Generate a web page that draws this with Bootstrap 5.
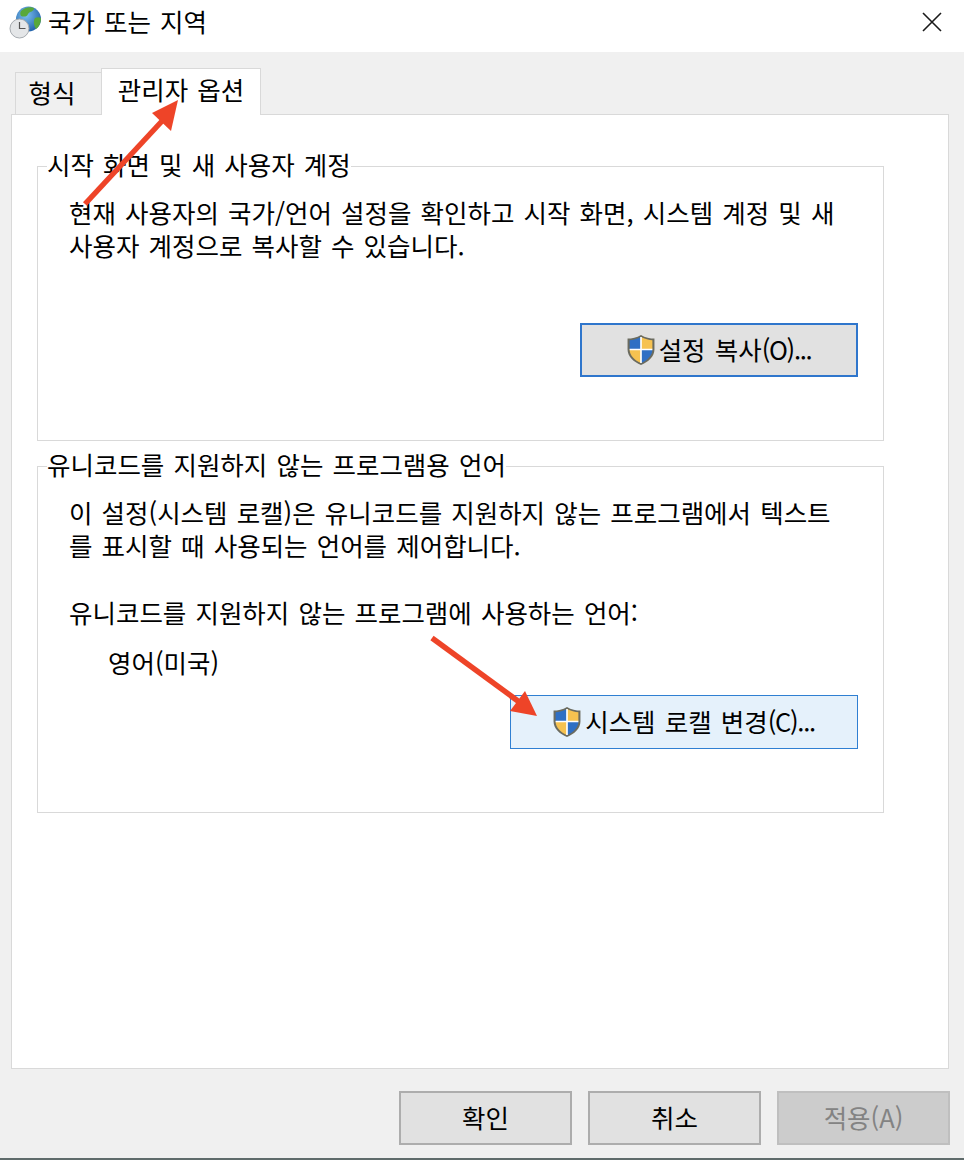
<!DOCTYPE html>
<html lang="ko">
  <head>
    <meta charset="UTF-8" />
    <meta name="viewport" content="width=device-width, initial-scale=1" />
    <title>국가 또는 지역</title>
    <link
      rel="stylesheet"
      href="https://cdn.jsdelivr.net/npm/bootstrap@5.3.0/dist/css/bootstrap.min.css"
    />
    <style>
      html, body { height: 100%; }
      body {
        width: 964px; height: 1160px; overflow: hidden; position: relative;
        background: #f0f0f0; color: #000;
        font-family: "Noto Sans CJK KR", "Liberation Sans", sans-serif;
        font-size: 25.5px; line-height: 33px; word-spacing: 2px;
      }
      .title-bar { height: 52px; background: #fff; padding: 0 22px 0 9px; }
      .title-text { margin-left: 5px; position: relative; top: -6px; }
      .close-icon { margin-top: -8px; }
      .tab-strip { height: 62px; padding: 16px 0 0 15px; align-items: flex-end; }
      .win-tab {
        background: #f0f0f0; border: 1px solid #d9d9d9; border-bottom: 0;
        height: 42px; width: 87px; padding-right: 13px; text-align: center; line-height: 37px;
      }
      .win-tab-on {
        background: #fff; height: 47px; width: 160px; margin-left: -1px; padding-right: 0;
        margin-bottom: -1px; position: relative; z-index: 1; line-height: 40px;
      }
      .tab-panel {
        background: #fff; border: 1px solid #d9d9d9; height: 955px;
        margin: 0 15px 0 11px; padding: 51px 64px 0 25px;
      }
      .group-box { border: 1px solid #d9d9d9; padding: 28px 30px 0 31px; position: relative; }
      .group-one { height: 275px; margin-bottom: 25px; }
      .group-two { height: 347px; }
      .group-title {
        position: absolute; left: 7px; top: -20px; background: transparent;
        padding: 0 2px; white-space: nowrap;
      }
      .group-title span { background: #fff; }
      .group-text { margin: 0; white-space: nowrap; }
      .win-btn {
        border-radius: 0; font-size: 25.5px; line-height: 33px; color: #000; padding: 0 0 4px;
        background: #e1e1e1; border: 2px solid #adadad; height: 54px; word-spacing: 2px;
        --bs-btn-hover-bg: #e1e1e1;
      }
      .btn-focus { width: 278px; border: 2px solid #2f76cc; }
      .btn-hover { width: 348px; background: #e5f1fb; border: 1px solid #2f7fd2; }
      .shield-icon { margin: 4px 4px 0 0; }
      .latin-tight { letter-spacing: -1.3px; }
      .btn-row-one { margin-top: 62px; margin-right: -5px; }
      .btn-row-two { margin-top: 17px; margin-right: -5px; }
      .gap-line { margin-top: 34px; }
      .locale-name { margin: 17px 0 0 39px; }
      .foot-row { padding: 22px 14px 0 0; }
      .foot-btn { width: 173px; }
      .btn-off {
        --bs-btn-disabled-bg: #cccccc; --bs-btn-disabled-border-color: #bfbfbf;
        --bs-btn-disabled-color: #838383; --bs-btn-disabled-opacity: 1;
      }
      .taskbar-line { position: absolute; left: 0; right: 0; bottom: 0; height: 2px; background: #5f6b6b; }
      .arrow-layer { position: absolute; left: 0; top: 0; z-index: 5; pointer-events: none; }
    </style>
  </head>
  <body>
    <!-- 제목 표시줄 -->
    <div class="title-bar d-flex align-items-center justify-content-between">
      <div class="d-flex align-items-center">
        <svg width="34" height="42" viewBox="0 0 34 42">
          <defs>
            <radialGradient id="globeFill" cx="0.4" cy="0.35" r="0.7">
              <stop offset="0" stop-color="#7cc0ef" />
              <stop offset="1" stop-color="#1f5fa8" />
            </radialGradient>
          </defs>
          <circle cx="19.500" cy="14" r="12.500" fill="url(#globeFill)" />
          <path d="M12 6c3-3 9-5 13-3 0 4-4 3-6 6-1 3-4 3-7 2-1-2-1-3 0-5zM26 13c2-1 4-1 6 0 0 5-2 9-5 11-2-3-3-8-1-11z" fill="#58a83a" />
          <circle cx="10.500" cy="23.500" r="9.500" fill="#e4e6e8" stroke="#a6abb0" />
          <path d="M10.500 17v6.500h6" fill="none" stroke="#555" stroke-width="1.200" />
        </svg>
        <span class="title-text">국가 또는 지역</span>
      </div>
      <svg class="close-icon" width="20" height="20" viewBox="0 0 20 20">
        <path d="M1 1l18 18M19 1L1 19" stroke="#1a1a1a" stroke-width="1.600" fill="none" />
      </svg>
    </div>

    <!-- 탭 -->
    <div class="tab-strip d-flex">
      <div class="win-tab">형식</div>
      <div class="win-tab win-tab-on">관리자 옵션</div>
    </div>

    <div class="tab-panel">
      <div class="group-box group-one">
        <div class="group-title"><span>시작 화면 및 새 사용자 계정</span></div>
        <p class="group-text">현재 사용자의 국가/언어 설정을 확인하고 시작 화면, 시스템 계정 및 새<br />사용자 계정으로 복사할 수 있습니다.</p>
        <div class="btn-row-one d-flex justify-content-end">
          <button type="button" class="btn win-btn btn-focus d-flex align-items-center justify-content-center">
            <svg class="shield-icon" width="28" height="30" viewBox="2 2 26 29"><use href="#shieldIcon" /></svg><span>설정 복사<span class="latin-tight">(O)...</span></span>
          </button>
        </div>
      </div>

      <div class="group-box group-two">
        <div class="group-title"><span>유니코드를 지원하지 않는 프로그램용 언어</span></div>
        <p class="group-text">이 설정(시스템 로캘)은 유니코드를 지원하지 않는 프로그램에서 텍스트<br />를 표시할 때 사용되는 언어를 제어합니다.</p>
        <p class="group-text gap-line">유니코드를 지원하지 않는 프로그램에 사용하는 언어:</p>
        <p class="group-text locale-name">영어(미국)</p>
        <div class="btn-row-two d-flex justify-content-end">
          <button type="button" class="btn win-btn btn-hover d-flex align-items-center justify-content-center">
            <svg class="shield-icon" width="28" height="30" viewBox="2 2 26 29"><use href="#shieldIcon" /></svg><span>시스템 로캘 변경<span class="latin-tight">(C)...</span></span>
          </button>
        </div>
      </div>
    </div>

    <div class="foot-row d-flex justify-content-end gap-3">
      <button type="button" class="btn win-btn foot-btn">확인</button>
      <button type="button" class="btn win-btn foot-btn">취소</button>
      <button type="button" class="btn win-btn foot-btn btn-off" disabled>적용(A)</button>
    </div>
    <div class="taskbar-line"></div>

    <!-- 방패 아이콘 -->
    <svg width="0" height="0" class="position-absolute">
      <defs>
        <g id="shieldIcon">
          <path d="M15 2C11 4.500 6 5.500 2 5.500V16c0 7 6 12 13 15 7-3 13-8 13-15V5.500c-4 0-9-1-13-3.500z" fill="#6b6b5f" />
          <path d="M15 4C11.500 6 7 7 4 7v9h11z" fill="#2f6fc4" />
          <path d="M15 4c3.500 2 8 3 11 3v9H15z" fill="#f6c250" />
          <path d="M4 16h11v13C9 26.500 4 22 4 16z" fill="#f6c250" />
          <path d="M26 16H15v13c6-2.500 11-7 11-13z" fill="#2f6fc4" />
          <path d="M15 4v25M4 16h22" stroke="#fff" stroke-width="1.600" fill="none" />
        </g>
      </defs>
    </svg>

    <!-- 빨간 화살표 -->
    <svg class="arrow-layer" width="964" height="1160" viewBox="0 0 964 1160">
      <path d="M85 204L163 120" stroke="#ee4428" stroke-width="5.500" fill="none" />
      <path d="M178 100L152 113L171 131z" fill="#ee4428" />
      <path d="M432 638L522 704" stroke="#ee4428" stroke-width="5.500" fill="none" />
      <path d="M537 716L510 711L525 691z" fill="#ee4428" />
    </svg>

    <script src="https://cdn.jsdelivr.net/npm/bootstrap@5.3.0/dist/js/bootstrap.bundle.min.js"></script>
  </body>
</html>
